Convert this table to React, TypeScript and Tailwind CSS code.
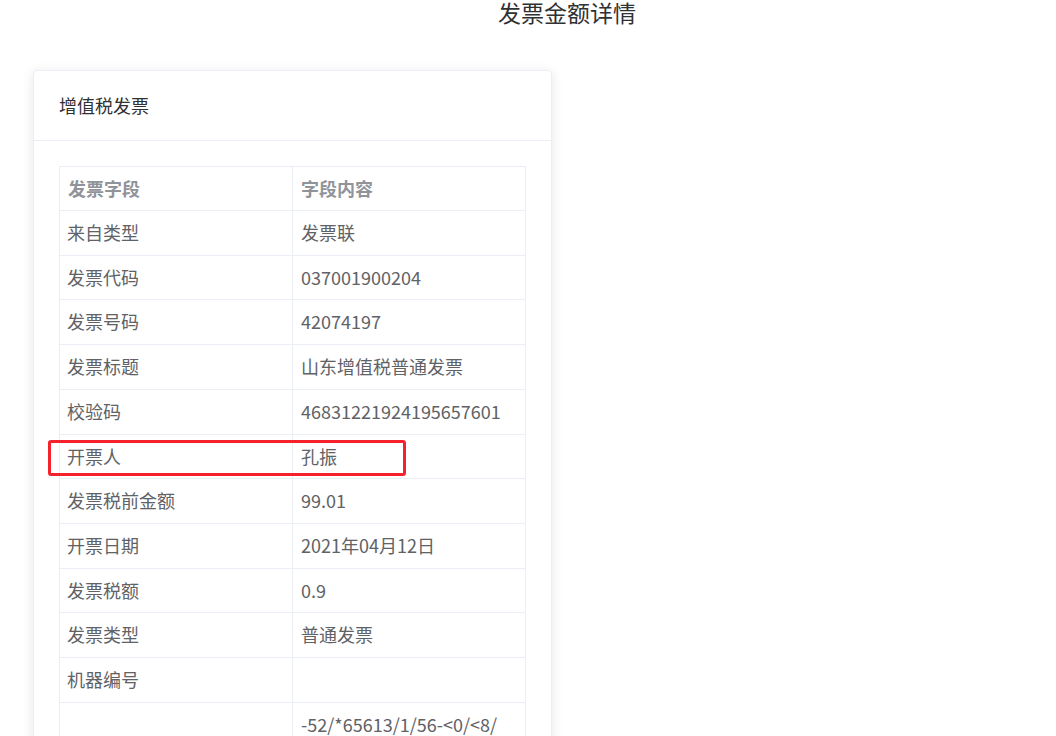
import React from 'react';

interface InvoiceField {
  label: string;
  value: string;
  highlight?: boolean;
}

const fields: InvoiceField[] = [
  { label: '来自类型', value: '发票联' },
  { label: '发票代码', value: '037001900204' },
  { label: '发票号码', value: '42074197' },
  { label: '发票标题', value: '山东增值税普通发票' },
  { label: '校验码', value: '46831221924195657601' },
  { label: '开票人', value: '孔振', highlight: true },
  { label: '发票税前金额', value: '99.01' },
  { label: '开票日期', value: '2021年04月12日' },
  { label: '发票税额', value: '0.9' },
  { label: '发票类型', value: '普通发票' },
  { label: '机器编号', value: '' },
  {
    label: '密码区',
    value: '-52/*65613/1/56-<0/<8/\n>3*9+9>2-7<67*>4*0/3>\n>59-/0*53>4<-1+0>1<41/\n6**>8+7-2<*/1>08*6/*3+<4',
  },
];

export default function App() {
  return (
    <div className="min-h-screen bg-white font-['Noto_Sans_CJK_SC','Noto_Sans',sans-serif] text-[#606266]">
      <h1 className="pl-[78px] text-center text-[23px] leading-[24px] font-normal text-[#303133]">
        发票金额详情
      </h1>

      <div className="mt-[46px] ml-[33px] w-[519px] rounded border border-[#ebeef5] bg-white shadow-[0_2px_12px_0_rgba(0,0,0,0.1)]">
        <div className="flex h-[70px] items-center border-b border-[#ebeef5] px-[25px] text-[18px] text-[#303133]">
          增值税发票
        </div>

        <div className="p-[25px]">
          <table className="w-full table-fixed border-collapse text-[18px]">
            <thead>
              <tr>
                <th className="w-1/2 border border-[#ebeef5] px-2 py-2 text-left font-bold leading-[27px] text-[#909399]">
                  发票字段
                </th>
                <th className="w-1/2 border border-[#ebeef5] px-2 py-2 text-left font-bold leading-[27px] text-[#909399]">
                  字段内容
                </th>
              </tr>
            </thead>
            <tbody>
              {fields.map((f) => (
                <tr key={f.label}>
                  <td className="relative border border-[#ebeef5] px-[7px] py-2 align-middle leading-[27.7px]">
                    {f.label}
                    {f.highlight && (
                      <span className="pointer-events-none absolute top-[5px] left-[-12px] h-[36px] w-[358px] rounded-[3px] border-[3px] border-[#f5222d]" />
                    )}
                  </td>
                  <td className="border border-[#ebeef5] px-2 py-2 align-middle leading-[27.7px] whitespace-pre-line break-all">
                    {f.value}
                  </td>
                </tr>
              ))}
            </tbody>
          </table>
        </div>
      </div>
    </div>
  );
}
